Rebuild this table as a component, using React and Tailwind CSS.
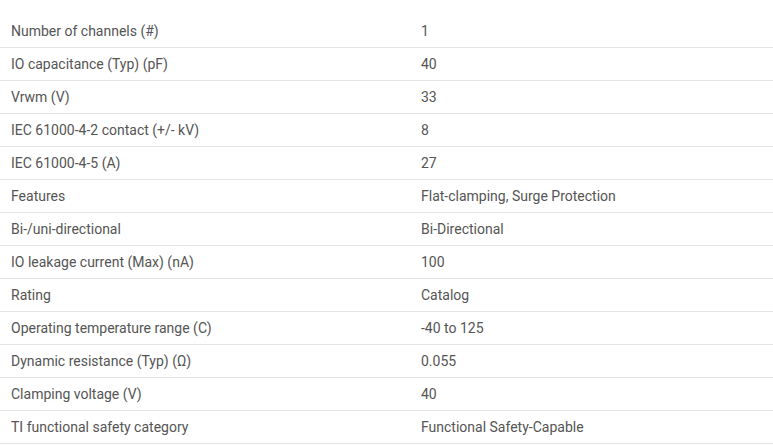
import React from "react";

const rows = [
  ["Number of channels (#)", "1"],
  ["IO capacitance (Typ) (pF)", "40"],
  ["Vrwm (V)", "33"],
  ["IEC 61000-4-2 contact (+/- kV)", "8"],
  ["IEC 61000-4-5 (A)", "27"],
  ["Features", "Flat-clamping, Surge Protection"],
  ["Bi-/uni-directional", "Bi-Directional"],
  ["IO leakage current (Max) (nA)", "100"],
  ["Rating", "Catalog"],
  ["Operating temperature range (C)", "-40 to 125"],
  ["Dynamic resistance (Typ) (\u03A9)", "0.055"],
  ["Clamping voltage (V)", "40"],
  ["TI functional safety category", "Functional Safety-Capable"],
];

const App = () => {
  return (
    <div className="w-[773px] h-[445px] bg-white pt-[15px] font-['Roboto',sans-serif] text-[14px] text-[#555]">
      {rows.map(([label, value]) => (
        <div
          key={label}
          className="flex h-[33px] items-center border-b border-[#e4e4e4]"
        >
          <div className="w-[421px] pl-[11px]">{label}</div>
          <div className="flex-1">{value}</div>
        </div>
      ))}
    </div>
  );
};

export default App;
